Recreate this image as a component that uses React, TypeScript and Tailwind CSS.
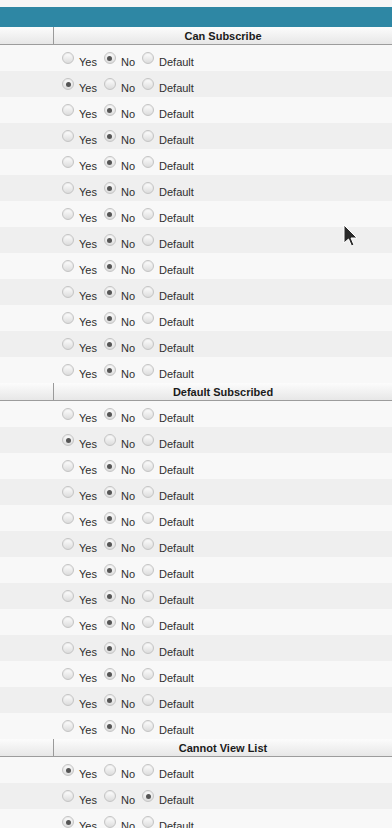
import React from "react";

type Val = "yes" | "no" | "default";

function Radio({ checked }: { checked: boolean }) {
  return (
    <span className="mt-[7px] flex h-[12px] w-[12px] shrink-0 items-center justify-center rounded-full border border-[#c4c4c4] bg-gradient-to-b from-[#ffffff] to-[#dcdcdc] shadow-[inset_0_1px_1px_rgba(0,0,0,0.08)]">
      {checked && <span className="block h-[5px] w-[5px] rounded-full bg-[#555]" />}
    </span>
  );
}

function Row({ v, shade }: { v: Val; shade: boolean }) {
  const opts: { k: Val; label: string }[] = [
    { k: "yes", label: "Yes" },
    { k: "no", label: "No" },
    { k: "default", label: "Default" },
  ];
  return (
    <div className={`flex h-[26px] ${shade ? "bg-[#efefef]" : "bg-[#f8f8f8]"}`}>
      <div className="w-[62px] shrink-0" />
      <div className="flex items-start">
        {opts.map((o) => (
          <React.Fragment key={o.k}>
            <Radio checked={v === o.k} />
            <span className="ml-[5px] mr-[7px] mt-[11px] text-[11px] leading-[13px] text-[#2e2e2e]">{o.label}</span>
          </React.Fragment>
        ))}
      </div>
    </div>
  );
}

function Header({ title }: { title: string }) {
  return (
    <div className="flex h-[18px] border-b border-[#9c9c9c] bg-gradient-to-b from-[#fcfcfc] to-[#e7e7e7]">
      <div className="w-[54px] shrink-0 border-r border-[#9a9a9a]" />
      <div className="flex flex-1 items-center justify-center pt-[2px] text-[11px] font-bold leading-[13px] text-[#1a1a1a]">
        {title}
      </div>
    </div>
  );
}

function Block({ title, vals }: { title: string; vals: Val[] }) {
  return (
    <div>
      <Header title={title} />
      {vals.map((v, i) => (
        <Row key={i} v={v} shade={i % 2 === 1} />
      ))}
    </div>
  );
}

export default function App() {
  const b1: Val[] = ["no", "yes", "no", "no", "no", "no", "no", "no", "no", "no", "no", "no", "no"];
  const b2: Val[] = ["no", "yes", "no", "no", "no", "no", "no", "no", "no", "no", "no", "no", "no"];
  const b3: Val[] = ["yes", "default", "yes"];
  return (
    <div
      className="relative h-[828px] w-[392px] overflow-hidden bg-[#f8f8f8]"
      style={{ fontFamily: '"Liberation Sans", Arial, sans-serif' }}
    >
      <div className="h-[7px] bg-[#f6f6f6]" />
      <div className="h-[20px] bg-[#2e87a4]" />
      <Block title="Can Subscribe" vals={b1} />
      <Block title="Default Subscribed" vals={b2} />
      <Block title="Cannot View List" vals={b3} />
      <svg className="absolute left-[343px] top-[224px]" width="16" height="24" viewBox="0 0 16 24">
        <path d="M1 1 L1 19 L5.5 15 L8.5 22 L11 21 L8 14 L14 14 Z" fill="#2a2a2a" stroke="#ffffff" strokeWidth="1" />
      </svg>
    </div>
  );
}
